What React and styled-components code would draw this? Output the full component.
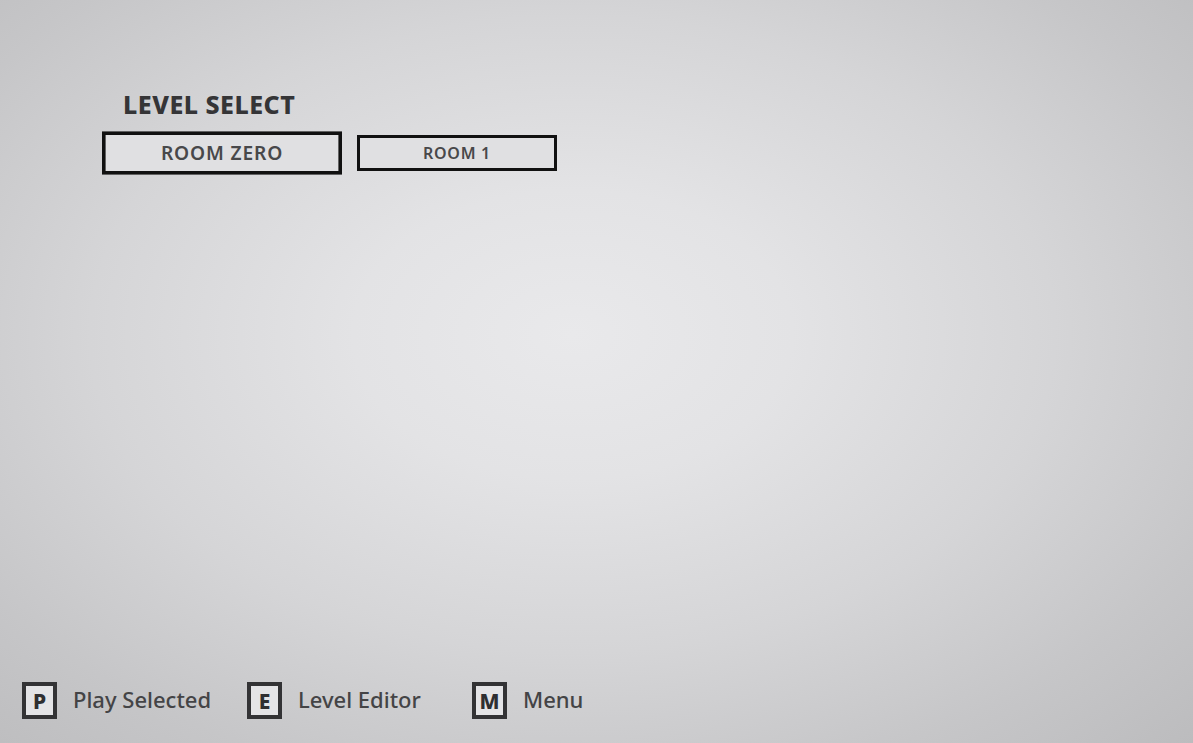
import React, { useState } from "react";
import styled, { createGlobalStyle } from "styled-components";

const GlobalStyle = createGlobalStyle`
  html, body {
    margin: 0;
    padding: 0;
    height: 100%;
  }
  body {
    font-family: "Noto Sans", "Open Sans", sans-serif;
    color: #3d3d3f;
  }
  #root {
    height: 100%;
  }
`;

const Screen = styled.div`
  width: 100vw;
  height: 100vh;
  box-sizing: border-box;
  display: flex;
  flex-direction: column;
  justify-content: space-between;
  background: radial-gradient(
    ellipse farthest-corner at 48% 45%,
    #e9e9eb 0%,
    #e3e3e5 25%,
    #d5d5d7 55%,
    #c6c6c8 80%,
    #bcbcbe 100%
  );
  overflow: hidden;
`;

const Main = styled.section`
  padding: 86px 0 0 122px;
`;

const Title = styled.h1`
  margin: 0 0 13px 1px;
  font-size: 25px;
  font-weight: 800;
  letter-spacing: 0.5px;
  color: #353537;
  line-height: 36px;
`;

const LevelList = styled.div`
  display: flex;
  gap: 35px;
`;

const LevelButton = styled.button`
  width: 200px;
  height: 36px;
  box-sizing: border-box;
  border: 3px solid #111;
  background: #e0e0e2;
  font-family: inherit;
  font-size: 16px;
  font-weight: 600;
  letter-spacing: 0.7px;
  color: #48484a;
  cursor: pointer;
  transform: scale(${({ $active }) => ($active ? 1.2 : 1)});
  transform-origin: center;
  padding: 0;
`;

const Footer = styled.footer`
  display: flex;
  padding: 0 0 24px 22px;
`;

const Hint = styled.div`
  width: 225px;
  display: flex;
  align-items: center;
  gap: 16px;
`;

const Key = styled.span`
  width: 35px;
  height: 37px;
  box-sizing: border-box;
  border: 4px solid #333335;
  background: #e4e4e6;
  display: flex;
  align-items: center;
  justify-content: center;
  font-size: 21px;
  font-weight: 800;
  color: #2f2f31;
`;

const HintLabel = styled.span`
  font-size: 22px;
  font-weight: 500;
  line-height: 1;
  margin-top: -3px;
  color: #444446;
`;

const levels = ["ROOM ZERO", "ROOM 1"];
const hints = [
  { key: "P", label: "Play Selected" },
  { key: "E", label: "Level Editor" },
  { key: "M", label: "Menu" },
];

export default function App() {
  const [selected, setSelected] = useState(0);
  return (
    <>
      <GlobalStyle />
      <Screen>
        <Main>
          <Title>LEVEL SELECT</Title>
          <LevelList>
            {levels.map((name, i) => (
              <LevelButton
                key={name}
                $active={i === selected}
                onClick={() => setSelected(i)}
              >
                {name}
              </LevelButton>
            ))}
          </LevelList>
        </Main>
        <Footer>
          {hints.map((h) => (
            <Hint key={h.key}>
              <Key>{h.key}</Key>
              <HintLabel>{h.label}</HintLabel>
            </Hint>
          ))}
        </Footer>
      </Screen>
    </>
  );
}
